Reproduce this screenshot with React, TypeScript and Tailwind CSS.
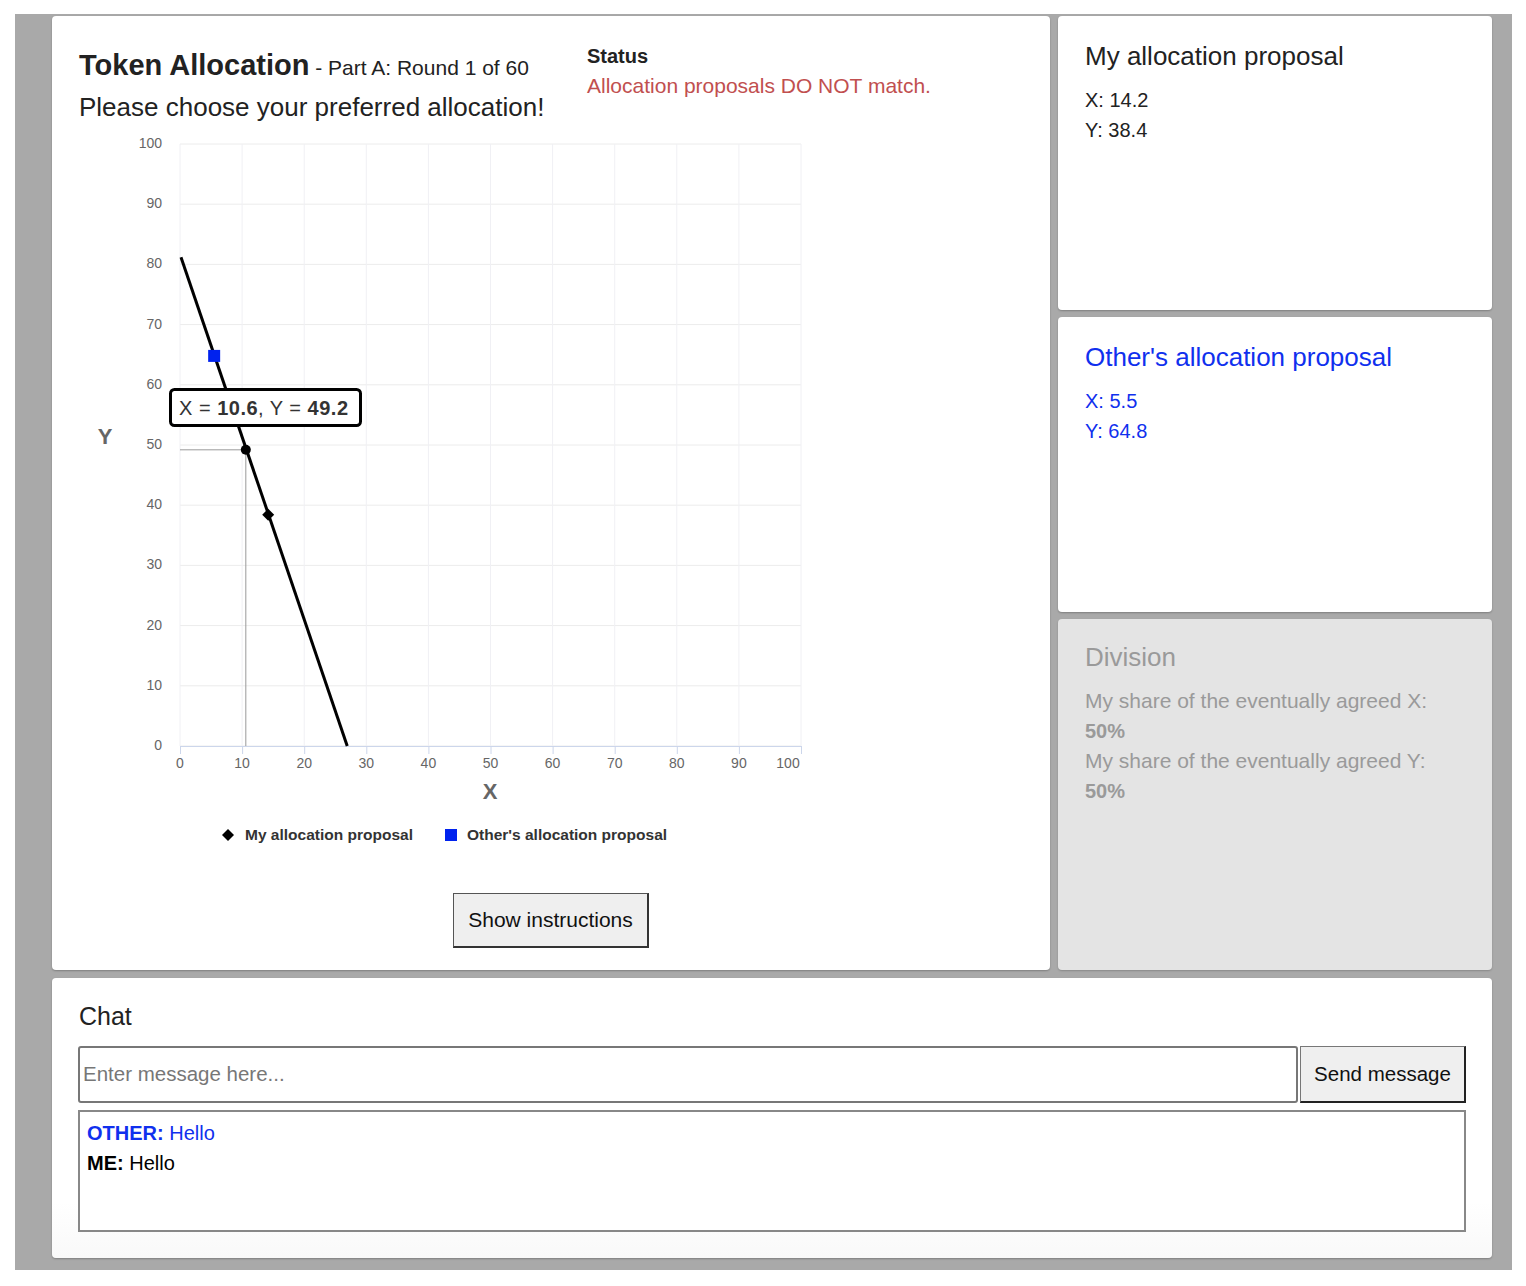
import React from "react";

const X = (v: number) => 101 + v * 6.21;
const Y = (v: number) => 612 - v * 6.02;

function Chart() {
  const ticks = [0, 10, 20, 30, 40, 50, 60, 70, 80, 90, 100];
  const px = X(10.6);
  const py = Y(49.2);
  const dx = X(14.2);
  const dy = Y(38.4);
  const bx = X(5.5);
  const by = Y(64.8);
  return (
    <svg width={760} height={730} className="block" style={{ fontFamily: '"Liberation Sans", Arial, sans-serif' }}>
      {ticks.map((t) => (
        <line key={"h" + t} x1={X(0)} x2={X(100)} y1={Y(t)} y2={Y(t)} stroke="#ececec" strokeWidth={1} />
      ))}
      {ticks.map((t) => (
        <line key={"v" + t} x1={X(t)} x2={X(t)} y1={Y(100)} y2={Y(0)} stroke="#f0f0f4" strokeWidth={1} />
      ))}
      <line x1={X(0)} x2={X(100)} y1={Y(0) + 0.5} y2={Y(0) + 0.5} stroke="#ccd6eb" strokeWidth={1} />
      {ticks.map((t) => (
        <line key={"t" + t} x1={X(t) + 0.5} x2={X(t) + 0.5} y1={Y(0)} y2={Y(0) + 8} stroke="#ccd6eb" strokeWidth={1} />
      ))}
      {ticks.map((t) => (
        <text key={"yl" + t} x={83} y={Y(t) + 4} textAnchor="end" fontSize={14} fill="#666">
          {t}
        </text>
      ))}
      {ticks.map((t) => (
        <text key={"xl" + t} x={t === 100 ? X(t) - 13 : X(t)} y={634} textAnchor="middle" fontSize={14} fill="#666">
          {t}
        </text>
      ))}
      <text x={26} y={310} textAnchor="middle" fontSize={22} fontWeight="bold" fill="#666">
        Y
      </text>
      <text x={411} y={665} textAnchor="middle" fontSize={22} fontWeight="bold" fill="#666">
        X
      </text>
      {/* crosshair */}
      <line x1={X(0)} x2={px} y1={py} y2={py} stroke="#999" strokeWidth={1} />
      <line x1={px} x2={px} y1={py} y2={Y(0)} stroke="#999" strokeWidth={1} />
      {/* line */}
      <line x1={X(0) + 1} y1={Y(81.2)} x2={X(26.93)} y2={Y(0)} stroke="#000" strokeWidth={3} />
      <circle cx={px} cy={py} r={5} fill="#000" />
      <path d={`M ${dx} ${dy - 6} L ${dx + 6} ${dy} L ${dx} ${dy + 6} L ${dx - 6} ${dy} Z`} fill="#000" />
      <rect x={bx - 6} y={by - 6} width={12} height={12} fill="#0022ee" />
      {/* tooltip */}
      <rect x={91.5} y={255.5} width={190} height={36} rx={4} fill="#fff" stroke="#000" strokeWidth={3} />
      <text x={100} y={281} fontSize={20} fill="#333" letterSpacing={0.5}>
        X = <tspan fontWeight="bold">10.6</tspan>, Y = <tspan fontWeight="bold">49.2</tspan>
      </text>
      {/* legend */}
      <path d="M 149 695 L 155 701 L 149 707 L 143 701 Z" fill="#000" />
      <text x={166} y={706} fontSize={15.5} fontWeight="bold" fill="#333">
        My allocation proposal
      </text>
      <rect x={366} y={695} width={12} height={12} fill="#0022ee" />
      <text x={388} y={706} fontSize={15.5} fontWeight="bold" fill="#333">
        Other's allocation proposal
      </text>
    </svg>
  );
}

export default function App() {
  const font = { fontFamily: '"Liberation Sans", Arial, sans-serif' };
  return (
    <div className="min-h-[1286px] bg-white pt-[14px] pl-[15px] pr-[14px]" style={font}>
      <div className="bg-[#a9a9a9] pl-[37px] pr-[20px] pt-[2px] pb-[12px] w-[1497px]">
        <div className="grid grid-cols-[998px_434px] gap-[8px]">
          {/* Main panel */}
          <div className="bg-white rounded-[4px] shadow-[0_1px_2px_rgba(0,0,0,0.25)] pt-[31px] pb-[22px] h-[954px]">
            <div className="flex pl-[27px]">
              <div className="w-[508px] text-[#222]">
                <div className="leading-[36px] whitespace-nowrap">
                  <span className="text-[29px] font-bold">Token Allocation</span>
                  <span className="text-[21px]"> - Part A: Round 1 of 60</span>
                </div>
                <div className="mt-[4px] text-[26px] leading-[30px] whitespace-nowrap">Please choose your preferred allocation!</div>
              </div>
              <div className="-mt-[3px]">
                <div className="text-[20px] font-bold leading-[24px] text-[#222]">Status</div>
                <div className="mt-[3px] text-[21px] leading-[30px] text-[#c14f4f] whitespace-nowrap">Allocation proposals DO NOT match.</div>
              </div>
            </div>
            <div className="pl-[27px] mt-[12px]">
              <Chart />
            </div>
            <div className="flex justify-center mt-[29px]">
              <button className="w-[196px] h-[55px] bg-[#efefef] border border-[#555] border-r-2 border-b-2 border-r-[#333] border-b-[#333] text-[21px] text-[#111]">
                Show instructions
              </button>
            </div>
          </div>
          {/* Right column */}
          <div className="flex flex-col gap-[7px]">
            <div className="bg-white rounded-[4px] shadow-[0_1px_2px_rgba(0,0,0,0.25)] h-[294px] pt-[25px] px-[27px] text-[#222]">
              <div className="text-[26px] leading-[30px]">My allocation proposal</div>
              <div className="mt-[14px] text-[20px] leading-[30px]">X: 14.2</div>
              <div className="text-[20px] leading-[30px]">Y: 38.4</div>
            </div>
            <div className="bg-white rounded-[4px] shadow-[0_1px_2px_rgba(0,0,0,0.25)] h-[295px] pt-[25px] px-[27px] text-[#1030ee]">
              <div className="text-[26px] leading-[30px]">Other's allocation proposal</div>
              <div className="mt-[14px] text-[20px] leading-[30px]">X: 5.5</div>
              <div className="text-[20px] leading-[30px]">Y: 64.8</div>
            </div>
            <div className="bg-[#e4e4e4] rounded-[4px] shadow-[0_1px_2px_rgba(0,0,0,0.2)] h-[351px] pt-[23px] px-[27px] text-[#9a9a9a]">
              <div className="text-[26px] leading-[30px]">Division</div>
              <div className="mt-[14px] text-[21px] leading-[30px] whitespace-nowrap">My share of the eventually agreed X:</div>
              <div className="text-[20px] leading-[30px] font-bold">50%</div>
              <div className="text-[21px] leading-[30px] whitespace-nowrap">My share of the eventually agreed Y:</div>
              <div className="text-[20px] leading-[30px] font-bold">50%</div>
            </div>
          </div>
        </div>
        {/* Chat */}
        <div className="mt-[8px] bg-gradient-to-b from-white from-80% to-[#f9f9f9] rounded-[4px] shadow-[0_1px_2px_rgba(0,0,0,0.25)] h-[280px] pt-[23px] px-[26px]">
          <div className="text-[25px] leading-[30px] text-[#222] pl-[1px]">Chat</div>
          <div className="mt-[15px] flex">
            <div className="flex-1 h-[57px] border-2 border-[#777] rounded-[3px] bg-white flex items-center pl-[3px] text-[20.5px] text-[#777]">
              Enter message here...
            </div>
            <button className="ml-[2px] w-[166px] h-[57px] bg-[#efefef] border border-[#777] border-r-2 border-b-2 border-r-[#222] border-b-[#222] text-[20.5px] text-[#111]">
              Send message
            </button>
          </div>
          <div className="mt-[7px] h-[122px] border-2 border-[#888] bg-white pt-[6px] pl-[7px] text-[20px] leading-[30px]">
            <div className="text-[#1030ee]">
              <span className="font-bold">OTHER:</span> Hello
            </div>
            <div className="text-black">
              <span className="font-bold">ME:</span> Hello
            </div>
          </div>
        </div>
      </div>
    </div>
  );
}
